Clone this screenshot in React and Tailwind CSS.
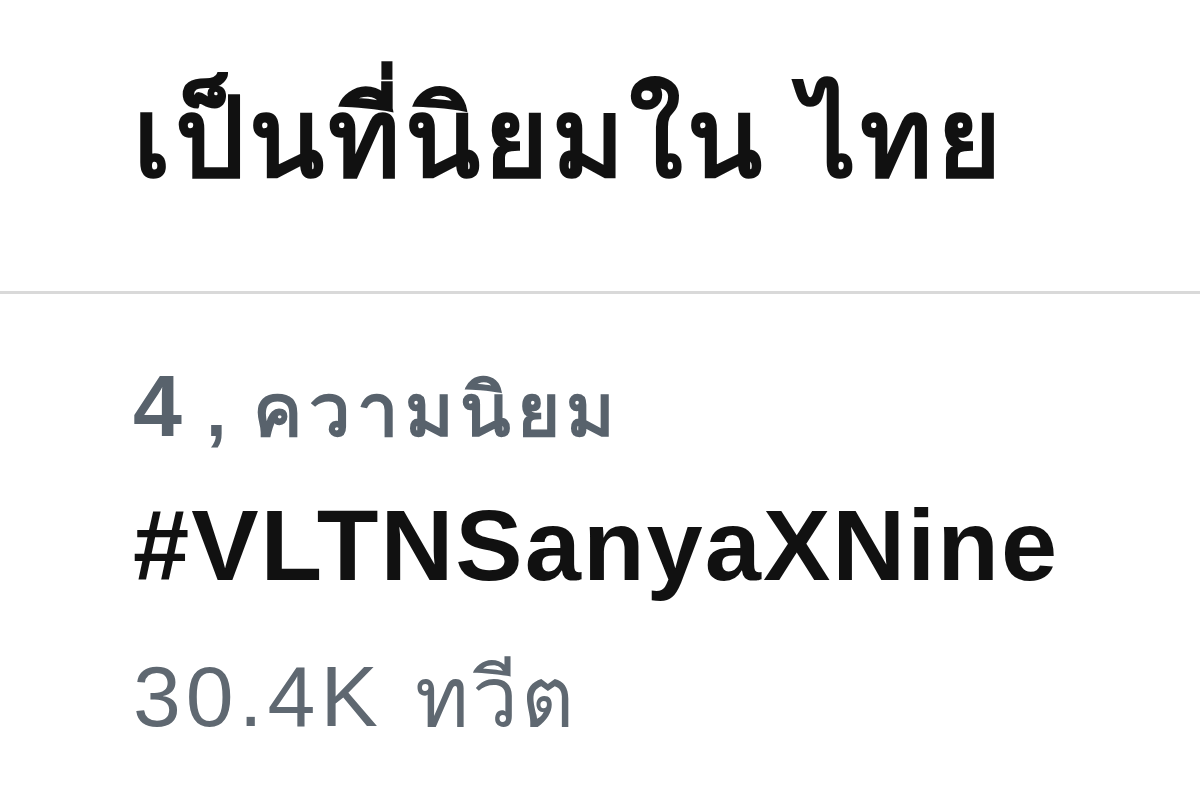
export default function App() {
  return (
    <div className="min-h-[800px] w-[1200px] bg-white font-['Liberation_Sans',Arial,sans-serif]">
      <div className="h-[294px] border-b-[3px] border-[#d9d9d9] pl-[133px] pt-[68px]">
        <h1 className="text-[110px] leading-[140px] font-bold tracking-[4px] text-[#111]">เป็นที่นิยมใน ไทย</h1>
      </div>
      <div className="pl-[133px] pt-[67px]">
        <div className="flex items-baseline font-bold text-[#58626c] leading-[90px]">
          <span className="text-[88px]">4</span>
          <span className="ml-[24px] text-[74px]">,</span>
          <span className="ml-[26px] text-[74px] tracking-[6px]">ความนิยม</span>
        </div>
        <div className="mt-[34px] text-[101px] leading-[110px] font-bold tracking-[2px] text-[#111]">#VLTNSanyaXNine</div>
        <div className="mt-[46px] flex items-baseline leading-[100px] text-[#5f6871]">
          <span className="text-[86px] tracking-[5px]">30.4K</span>
          <span className="ml-[32px] text-[82px] tracking-[3px]">ทวีต</span>
        </div>
      </div>
    </div>
  );
}
